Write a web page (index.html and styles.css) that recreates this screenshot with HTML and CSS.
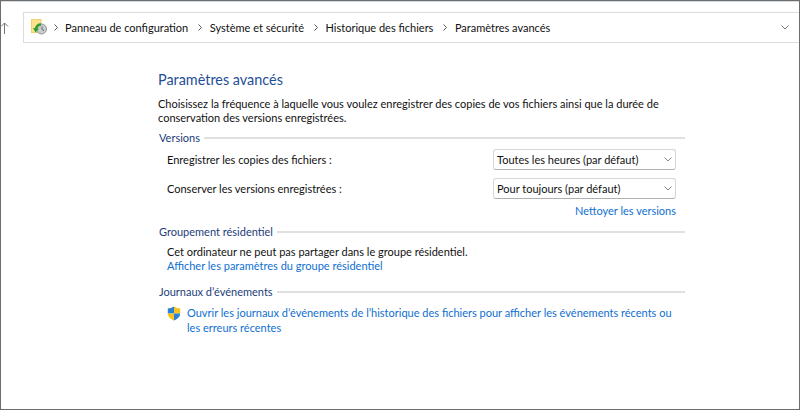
FILE: index.html
```html
<!DOCTYPE html>
<html lang="fr">
<head>
<meta charset="utf-8">
<title>Paramètres avancés</title>
<link rel="stylesheet" href="styles.css">
</head>
<body>
<div class="frame">
  <div class="toolbar">
    <svg class="up" width="8" height="12" viewBox="0 0 8 12"><path d="M3.5 12V1M0 4.5L3.5 1L7 4.5" fill="none" stroke="#777" stroke-width="1"/></svg>
    <div class="address">
      <svg class="fh" width="17" height="17" viewBox="0 0 17 17">
        <rect x="0.5" y="0.5" width="9.5" height="13" fill="#fbe28f" stroke="#f0d070" stroke-width="1"/>
        <circle cx="10.5" cy="10" r="5" fill="#c9cdd0" stroke="#8f9396"/>
        <path d="M11 7.5V10.5L13 11.5" fill="none" stroke="#666" stroke-width="1"/>
        <path d="M10 5.5C7.5 5.5 5.5 7 5 10" fill="none" stroke="#2f9e2a" stroke-width="2.5"/>
        <path d="M2 9L8 9.5L4.5 13.5Z" fill="#2f9e2a"/>
      </svg>
      <svg class="sep" width="4" height="7" viewBox="0 0 4 7"><path d="M0.5 0.5L3.5 3.5L0.5 6.5" fill="none" stroke="#555"/></svg><span class="crumb">Panneau de configuration</span>
      <svg class="sep" width="4" height="7" viewBox="0 0 4 7"><path d="M0.5 0.5L3.5 3.5L0.5 6.5" fill="none" stroke="#555"/></svg><span class="crumb">Système et sécurité</span>
      <svg class="sep" width="4" height="7" viewBox="0 0 4 7"><path d="M0.5 0.5L3.5 3.5L0.5 6.5" fill="none" stroke="#555"/></svg><span class="crumb">Historique des fichiers</span>
      <svg class="sep" width="4" height="7" viewBox="0 0 4 7"><path d="M0.5 0.5L3.5 3.5L0.5 6.5" fill="none" stroke="#555"/></svg><span class="crumb">Paramètres avancés</span>
      <svg class="drop" width="8" height="5" viewBox="0 0 8 5"><path d="M0.5 0.5L4 4L7.5 0.5" fill="none" stroke="#777" stroke-width="1"/></svg>
    </div>
  </div>
  <main class="content">
    <h1 class="title">Paramètres avancés</h1>
    <p class="intro">Choisissez la fréquence à laquelle vous voulez enregistrer des copies de vos fichiers ainsi que la durée de conservation des versions enregistrées.</p>

    <div class="legend legend-first"><span>Versions</span><i></i></div>
    <div class="row">
      <span>Enregistrer les copies des fichiers :</span>
      <div class="select"><span>Toutes les heures (par défaut)</span><svg width="8" height="5" viewBox="0 0 8 5"><path d="M0.5 0.5L4 4L7.5 0.5" fill="none" stroke="#888" stroke-width="1"/></svg></div>
    </div>
    <div class="row row-second">
      <span>Conserver les versions enregistrées :</span>
      <div class="select"><span>Pour toujours (par défaut)</span><svg width="8" height="5" viewBox="0 0 8 5"><path d="M0.5 0.5L4 4L7.5 0.5" fill="none" stroke="#888" stroke-width="1"/></svg></div>
    </div>
    <div class="clean"><a class="link">Nettoyer les versions</a></div>

    <div class="legend legend-home"><span>Groupement résidentiel</span><i></i></div>
    <div class="block">
      <div>Cet ordinateur ne peut pas partager dans le groupe résidentiel.</div>
      <a class="link">Afficher les paramètres du groupe résidentiel</a>
    </div>

    <div class="legend legend-log"><span>Journaux d’événements</span><i></i></div>
    <div class="logs">
      <svg class="shield" width="14" height="15" viewBox="0 0 14 15">
        <path d="M7 0.5C5 1.8 3 2.3 0.8 2.4V7.5H7Z" fill="#2b83d6"/>
        <path d="M7 0.5C9 1.8 11 2.3 13.2 2.4V7.5H7Z" fill="#f6c21c"/>
        <path d="M0.8 7.5H7V14.5C3.5 13 0.8 10.5 0.8 7.5Z" fill="#f6c21c"/>
        <path d="M7 7.5H13.2C13.2 10.5 10.5 13 7 14.5Z" fill="#2b83d6"/>
      </svg>
      <a class="link">Ouvrir les journaux d’événements de l’historique des fichiers pour afficher les événements récents ou les erreurs récentes</a>
    </div>
  </main>
</div>
</body>
</html>
```
FILE: styles.css
```css
* { box-sizing: border-box; }
html, body { margin: 0; padding: 0; }
body {
  width: 800px;
  height: 410px;
  background: #fff;
  color: #111;
  font-family: "Lato", "Open Sans", sans-serif;
  font-size: 11px;
  line-height: 15px;
  overflow: hidden;
}
.frame {
  width: 800px;
  height: 410px;
  border: 1px solid #6d6d6d;
  box-shadow: inset 0 1px 0 #d5dde3;
}
.toolbar {
  display: flex;
  align-items: center;
  height: 31px;
  margin-top: 11px;
  gap: 14px;
}
.up { flex: none; }
.address {
  flex: 1;
  display: flex;
  align-items: center;
  height: 31px;
  border: 1px solid #dcdcdc;
  border-right: none;
  padding: 0 10px 0 7px;
}
.fh { flex: none; margin-right: 6px; }
.sep { flex: none; margin: 0 8px 0 9.5px; }
.fh + .sep { margin-left: 0; margin-right: 7px; }
.crumb { white-space: nowrap; }
.drop { margin-left: auto; }
.content {
  margin-left: 157px;
  width: 527px;
}
.title {
  margin: 27px 0 0;
  font-size: 14.4px;
  line-height: 20px;
  font-weight: 400;
  color: #1f4e97;
}
.intro { margin: 7px 0 0; line-height: 14px; }
.legend {
  display: flex;
  align-items: center;
  gap: 4px;
  color: #1c3d7a;
  padding-left: 1px;
}
.legend i { flex: 1; height: 2px; background: #e0e0e0; }
.legend-first { margin-top: 5px; }
.legend-home { margin-top: 6px; }
.legend-log { margin-top: 11px; }
.row {
  display: flex;
  align-items: center;
  justify-content: space-between;
  padding: 0 9px 0 9px;
  margin-top: 4px;
}
.row-second { margin-top: 8px; }
.select {
  display: flex;
  align-items: center;
  justify-content: space-between;
  width: 183px;
  height: 21px;
  border: 1px solid #d6d6d6;
  border-bottom-color: #b0b0b0;
  border-radius: 3px;
  padding: 0 3px 0 3px;
}
.clean {
  text-align: right;
  padding-right: 9px;
  margin-top: 4px;
}
.link { color: #0f6fd0; }
.block { padding-left: 9px; margin-top: 6px; line-height: 14px; }
.logs {
  display: flex;
  gap: 6px;
  padding: 0 10px 0 9px;
  margin-top: 6px;
}
.shield { flex: none; margin-top: 1px; }
```
